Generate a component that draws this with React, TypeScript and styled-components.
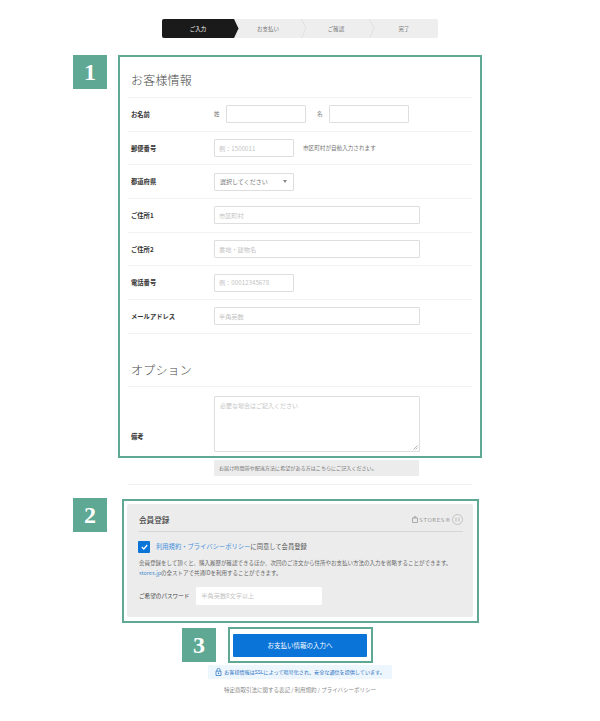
import styled, { createGlobalStyle } from 'styled-components';

const green = '#5fa893';

const GlobalStyle = createGlobalStyle`
  html, body {
    margin: 0;
    padding: 0;
    background: #fff;
  }
  body {
    font-family: "Noto Sans CJK JP", "Noto Sans", sans-serif;
    color: #444;
  }
  * {
    box-sizing: border-box;
  }
  input::placeholder {
    color: #c4c4c4;
    opacity: 1;
  }
`;

const Page = styled.div`
  position: relative;
  width: 600px;
  height: 721px;
  overflow: hidden;
  padding-top: 19px;
`;

const Stepper = styled.ol`
  display: flex;
  width: 276px;
  height: 19px;
  margin: 0 0 0 162px;
  padding: 0;
  list-style: none;
  background: #eee;
  border-radius: 2px;
`;

const Step = styled.li<{ $active?: boolean; $width: number }>`
  position: relative;
  display: flex;
  align-items: center;
  justify-content: center;
  width: ${p => p.$width}px;
  font-size: 5.5px;
  color: ${p => (p.$active ? '#fff' : '#777')};
  background: ${p => (p.$active ? '#1a1a1a' : 'transparent')};
  border-radius: ${p => (p.$active ? '2px 0 0 2px' : '0')};
`;

const StepArrow = styled.svg`
  position: absolute;
  top: 0;
  left: 100%;
  margin-left: -1px;
`;

const Form = styled.form`
  width: 344px;
  margin: 0 0 0 128px;
`;

const SectionTitle = styled.h2<{ $height: number; $pad: number }>`
  display: flex;
  align-items: center;
  height: ${p => p.$height}px;
  margin: 0;
  padding: ${p => p.$pad}px 0 0 3px;
  font-size: 12px;
  line-height: 1;
  font-weight: 300;
  letter-spacing: 0.2px;
  color: #4a4a4a;
  border-bottom: 1px solid #f2f2f2;
`;

const Row = styled.div`
  display: flex;
  align-items: center;
  height: 33.7px;
  border-bottom: 1px solid #f2f2f2;
`;

const Label = styled.label`
  flex: none;
  width: 86px;
  padding-left: 3px;
  font-size: 6.3px;
  font-weight: 700;
  color: #333;
`;

const Hint = styled.span<{ $before?: number; $after?: number }>`
  margin: 0 ${p => p.$after ?? 0}px 0 ${p => p.$before ?? 0}px;
  font-size: 5.6px;
  color: #777;
`;

const Field = styled.input<{ $width: number }>`
  flex: none;
  width: ${p => p.$width}px;
  height: 18px;
  padding: 0 4px;
  font: inherit;
  font-size: 6.2px;
  color: #666;
  background: #fff;
  border: 1px solid #dedede;
  border-radius: 1px;
  outline: none;
`;

const SelectBox = styled.div`
  display: flex;
  align-items: center;
  justify-content: space-between;
  width: 80px;
  height: 18px;
  padding: 0 6px 0 5px;
  font-size: 6px;
  color: #777;
  border: 1px solid #dedede;
  border-radius: 1px;
`;

const Caret = styled.span`
  width: 0;
  height: 0;
  border-left: 2.5px solid transparent;
  border-right: 2.5px solid transparent;
  border-top: 3.5px solid #888;
`;

const MemoRow = styled.div`
  display: flex;
  align-items: flex-end;
  height: 65px;
  padding-top: 9px;
`;

const MemoLabel = styled(Label)`
  padding-bottom: 11px;
`;

const MemoBox = styled.div`
  position: relative;
  width: 206px;
  height: 56px;
  padding: 4px 5px;
  font-size: 6px;
  color: #c4c4c4;
  border: 1px solid #dedede;
  border-radius: 1px;
`;

const Grip = styled.svg`
  position: absolute;
  right: 1px;
  bottom: 1px;
`;

const NoteWrap = styled.div`
  height: 33px;
  padding: 8px 0 0 86px;
  border-bottom: 1px solid #f0f0f0;
`;

const Note = styled.div`
  display: flex;
  align-items: center;
  width: 205px;
  height: 16px;
  padding-left: 5px;
  font-size: 5.1px;
  color: #777;
  background: #ececec;
  border-radius: 1px;
`;

const Card = styled.section`
  width: 346px;
  height: 113px;
  margin: 19px 0 0 127px;
  padding: 7px 10px 0 12px;
  background: #ececec;
  border-radius: 2px;
`;

const CardHead = styled.div`
  display: flex;
  align-items: center;
  justify-content: space-between;
  height: 21px;
  padding-bottom: 2px;
  border-bottom: 1px solid #d6d6d6;
`;

const CardTitle = styled.h3`
  margin: 0;
  font-size: 7.6px;
  font-weight: 500;
  color: #444;
`;

const Brand = styled.div`
  display: flex;
  align-items: center;
  gap: 1px;
  font-family: "DejaVu Sans", sans-serif;
  font-size: 5.5px;
  letter-spacing: 0.6px;
  color: #999;
`;

const Agree = styled.div`
  display: flex;
  align-items: center;
  gap: 6px;
  margin-top: 9px;
  font-size: 6.3px;
  color: #555;
`;

const Check = styled.span`
  display: flex;
  align-items: center;
  justify-content: center;
  width: 12px;
  height: 12px;
  margin-left: -1px;
  background: #0a74d9;
  border-radius: 1px;
`;

const TermsLink = styled.span`
  color: #3f8fdc;
`;

const Fine = styled.p`
  margin: 5px 0 0;
  font-size: 5.5px;
  line-height: 10px;
  white-space: nowrap;
  color: #666;
`;

const FineLink = styled.span`
  color: #4a8fd0;
`;

const PasswordRow = styled.div`
  display: flex;
  align-items: center;
  gap: 7px;
  margin-top: 9px;
  font-size: 5.6px;
  color: #444;
`;

const PasswordField = styled(Field)`
  border-color: #fff;
`;

const Submit = styled.button`
  display: block;
  width: 134px;
  height: 23px;
  margin: 17px 0 0 233px;
  padding: 0;
  font: inherit;
  font-size: 6.5px;
  color: #fff;
  background: #0a74d9;
  border: none;
  border-radius: 1px;
`;

const SslNote = styled.div`
  display: flex;
  align-items: center;
  justify-content: center;
  gap: 2px;
  width: 184px;
  height: 14px;
  margin: 8px 0 0 208px;
  font-size: 5.1px;
  color: #1f6fc0;
  background: #eef6fd;
`;

const FooterLinks = styled.div`
  margin-top: 5px;
  font-size: 5.5px;
  line-height: 12px;
  text-align: center;
  color: #888;
`;

/* annotations laid over the screenshot */
const Frame = styled.div<{ $x: number; $y: number; $w: number; $h: number }>`
  position: absolute;
  left: ${p => p.$x}px;
  top: ${p => p.$y}px;
  width: ${p => p.$w}px;
  height: ${p => p.$h}px;
  border: 2px solid ${green};
  pointer-events: none;
`;

const Badge = styled.div<{ $x: number; $y: number }>`
  position: absolute;
  left: ${p => p.$x}px;
  top: ${p => p.$y}px;
  display: flex;
  align-items: center;
  justify-content: center;
  width: 34px;
  height: 34px;
  font-family: "Liberation Serif", serif;
  font-size: 24px;
  font-weight: 700;
  color: #fff;
  background: ${green};
`;

const steps = [
  { name: 'ご入力', width: 72 },
  { name: 'お支払い', width: 68 },
  { name: 'ご確認', width: 68 },
  { name: '完了', width: 68 },
];

export default function App() {
  return (
    <Page>
      <GlobalStyle />
      <Stepper>
        {steps.map((step, i) => (
          <Step key={step.name} $active={i === 0} $width={step.width}>
            {step.name}
            {i === 0 && (
              <StepArrow width="6" height="19" viewBox="0 0 6 19">
                <path d="M0 0h1l4.5 9.5L1 19H0z" fill="#1a1a1a" />
              </StepArrow>
            )}
            {(i === 1 || i === 2) && (
              <StepArrow width="6" height="19" viewBox="0 0 6 19">
                <path d="M0.5 0l4.5 9.5L0.5 19" fill="none" stroke="#e0e0e0" strokeWidth="1" />
              </StepArrow>
            )}
          </Step>
        ))}
      </Stepper>

      <Form>
        <SectionTitle $height={60} $pad={24}>お客様情報</SectionTitle>
        <Row>
          <Label>お名前</Label>
          <Hint $after={6.4}>姓</Hint>
          <Field $width={80} />
          <Hint $before={11} $after={6.4}>名</Hint>
          <Field $width={80} />
        </Row>
        <Row>
          <Label>郵便番号</Label>
          <Field $width={80} placeholder="例：1500011" />
          <Hint $before={9}>市区町村が自動入力されます</Hint>
        </Row>
        <Row>
          <Label>都道府県</Label>
          <SelectBox>
            選択してください
            <Caret />
          </SelectBox>
        </Row>
        <Row>
          <Label>ご住所1</Label>
          <Field $width={206} placeholder="市区町村" />
        </Row>
        <Row>
          <Label>ご住所2</Label>
          <Field $width={206} placeholder="番地・建物名" />
        </Row>
        <Row>
          <Label>電話番号</Label>
          <Field $width={80} placeholder="例：00012345678" />
        </Row>
        <Row>
          <Label>メールアドレス</Label>
          <Field $width={206} placeholder="半角英数" />
        </Row>

        <SectionTitle $height={53} $pad={21}>オプション</SectionTitle>
        <MemoRow>
          <MemoLabel>備考</MemoLabel>
          <MemoBox>
            必要な場合はご記入ください
            <Grip width="5" height="5" viewBox="0 0 5 5">
              <path d="M0.5 4.5l4-4M2.5 4.5l2-2" stroke="#999" strokeWidth="0.7" />
            </Grip>
          </MemoBox>
        </MemoRow>
        <NoteWrap>
          <Note>お届け時間帯や配送方法に希望がある方はこちらにご記入ください。</Note>
        </NoteWrap>
      </Form>

      <Card>
        <CardHead>
          <CardTitle>会員登録</CardTitle>
          <Brand>
            <svg width="6" height="7" viewBox="0 0 6 7">
              <path d="M0.5 2h5v4.5h-5zM2 2V0.8h2V2" fill="none" stroke="#999" strokeWidth="0.8" />
            </svg>
            STORES®
            <svg width="11" height="11" viewBox="0 0 11 11">
              <circle cx="5.5" cy="5.5" r="5" fill="none" stroke="#aaa" strokeWidth="0.6" />
              <path d="M4 3.5v4M7 3.5v4" stroke="#aaa" strokeWidth="0.7" />
            </svg>
          </Brand>
        </CardHead>
        <Agree>
          <Check>
            <svg width="7" height="6" viewBox="0 0 7 6">
              <path d="M0.8 3l2 2L6.2 1" fill="none" stroke="#fff" strokeWidth="1.2" />
            </svg>
          </Check>
          <span>
            <TermsLink>利用規約・プライバシーポリシー</TermsLink>に同意して会員登録
          </span>
        </Agree>
        <Fine>
          会員登録をして頂くと、購入履歴が確認できるほか、次回のご注文から住所やお支払い方法の入力を省略することができます。
          <br />
          <FineLink>stores.jp</FineLink>の全ストアで共通IDを利用することができます。
        </Fine>
        <PasswordRow>
          ご希望のパスワード
          <PasswordField $width={126} placeholder="半角英数8文字以上" />
        </PasswordRow>
      </Card>

      <Submit type="button">お支払い情報の入力へ</Submit>
      <SslNote>
        <svg width="7" height="8" viewBox="0 0 7 8">
          <path d="M1 3.2h5v4.3H1zM2 3.2V1.8a1.5 1.5 0 0 1 3 0v1.4" fill="none" stroke="#1f6fc0" strokeWidth="0.7" />
          <circle cx="3.5" cy="5.3" r="0.7" fill="#1f6fc0" />
        </svg>
        お客様情報はSSLによって暗号化され、安全な通信を提供しています。
      </SslNote>
      <FooterLinks>特定商取引法に関する表記 / 利用規約 / プライバシーポリシー</FooterLinks>

      <Frame $x={118} $y={55} $w={364} $h={403} />
      <Frame $x={122} $y={499} $w={357} $h={124} />
      <Frame $x={228} $y={627} $w={145} $h={36} />
      <Badge $x={73} $y={55}>1</Badge>
      <Badge $x={73} $y={498}>2</Badge>
      <Badge $x={182} $y={628}>3</Badge>
    </Page>
  );
}
